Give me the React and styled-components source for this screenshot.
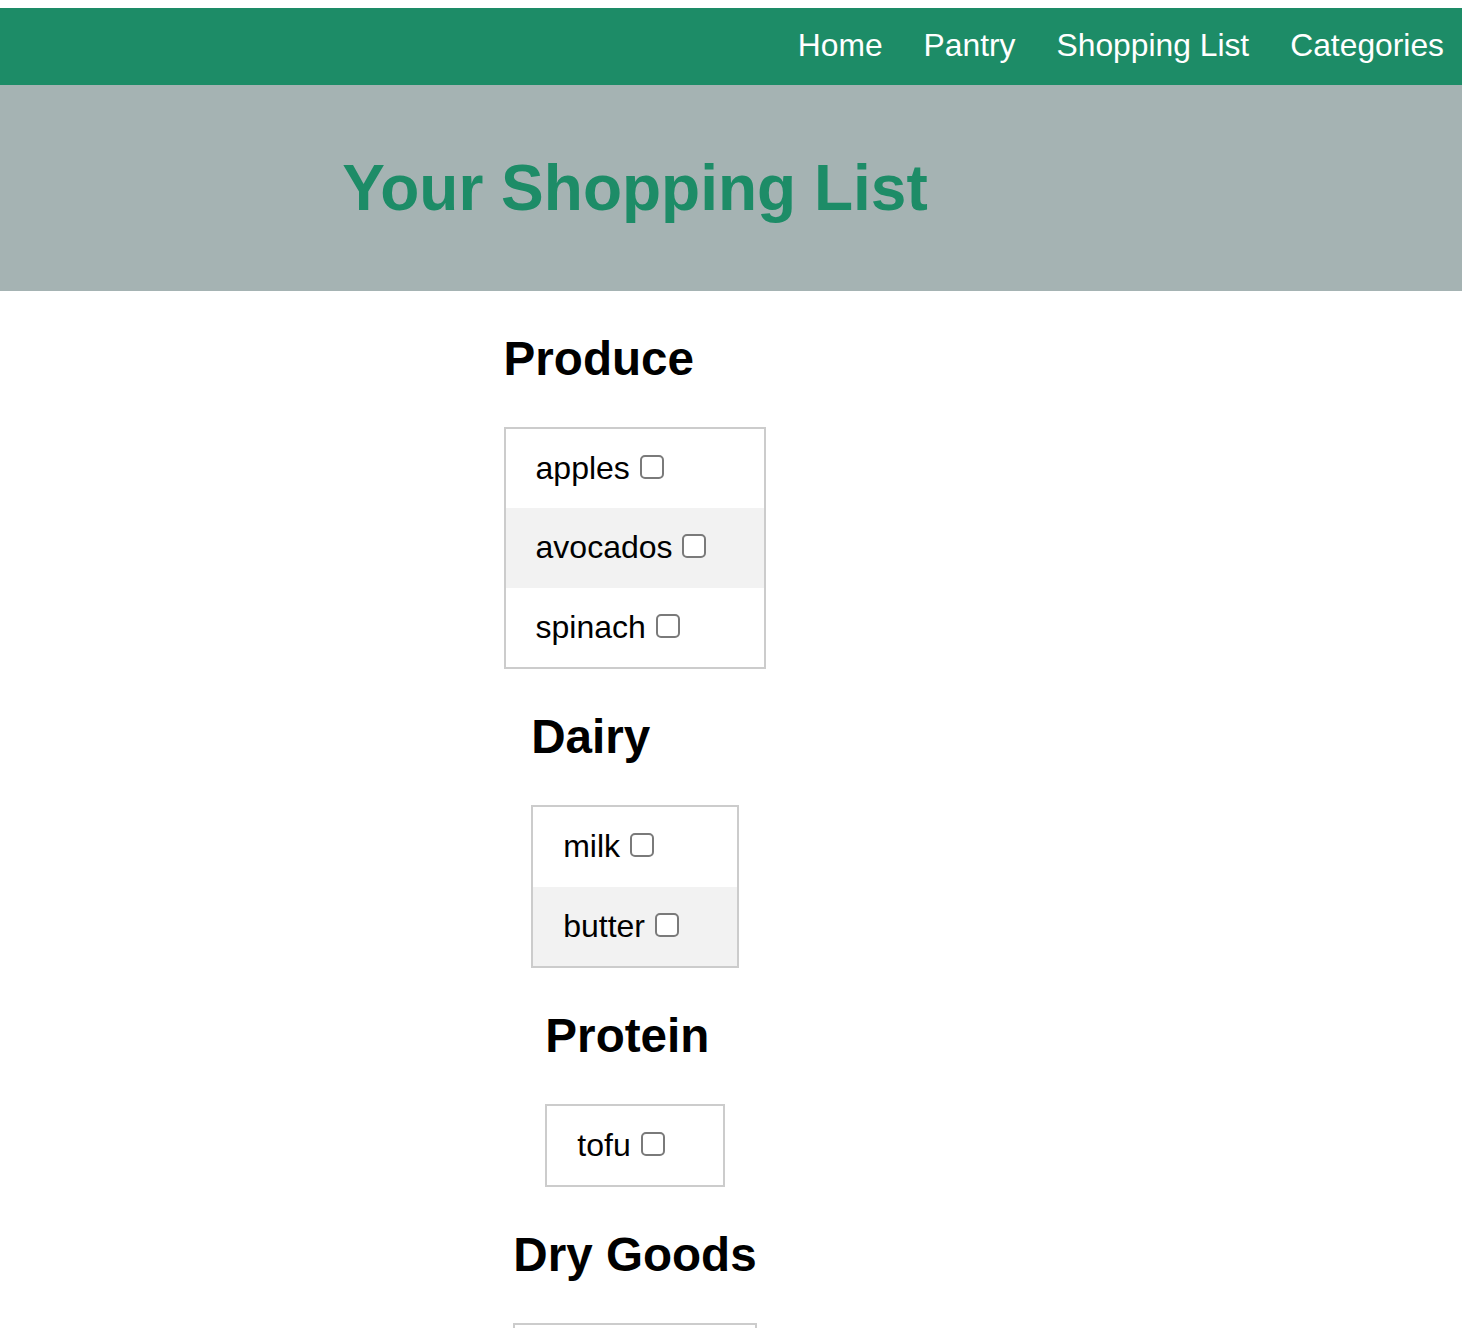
import React from "react";
import styled, { createGlobalStyle } from "styled-components";

const GlobalStyle = createGlobalStyle`
  html, body {
    margin: 0;
    padding: 0;
    background: #ffffff;
  }
  body {
    padding-top: 8px;
    font-family: "Liberation Sans", Arial, Helvetica, sans-serif;
    font-size: 32px;
    color: #000;
  }
`;

const NavBar = styled.nav`
  height: 77px;
  box-sizing: border-box;
  padding: 0 18px 1px 0;
  background: #1d8c67;
  display: flex;
  justify-content: flex-end;
  align-items: center;
  gap: 41px;
`;

const NavLink = styled.a`
  color: #ffffff;
  font-size: 31.8px;
  text-decoration: none;
  line-height: 1;
  cursor: pointer;
`;

const Hero = styled.header`
  background: #a5b3b3;
  height: 206px;
  display: flex;
  align-items: center;
  justify-content: center;
  padding-right: 192px;
  box-sizing: border-box;
`;

const Title = styled.h1`
  margin: 0;
  color: #1d8c67;
  font-size: 64px;
  font-weight: 700;
  line-height: normal;
`;

const Main = styled.main`
  display: flex;
  flex-direction: column;
  align-items: center;
  padding-right: 192px;
`;

const Section = styled.section`
  width: fit-content;
  display: flex;
  flex-direction: column;
  align-items: stretch;
`;

const Heading = styled.h2`
  margin: 40px 0 41px;
  font-size: 47.6px;
  font-weight: 700;
  line-height: 55px;
`;

const List = styled.ul`
  list-style: none;
  margin: 0;
  padding: 0;
  border: 2px solid #cccccc;
`;

const Row = styled.li`
  padding: 21px 58px 21.4px 30px;
  background: ${(p) => (p.$alt ? "#f2f2f2" : "#ffffff")};
  font-size: 32px;
  line-height: normal;
  white-space: nowrap;
`;

const Check = styled.input.attrs({ type: "checkbox" })`
  appearance: none;
  -webkit-appearance: none;
  display: inline-block;
  width: 24px;
  height: 24px;
  margin: 0 0 0 1px;
  border: 2px solid #7a7a7a;
  border-radius: 5px;
  background: #ffffff;
  box-sizing: border-box;
  vertical-align: baseline;
  cursor: pointer;
  &:checked {
    background: #1d8c67;
    border-color: #1d8c67;
  }
`;

const categories = [
  { name: "Produce", items: ["apples", "avocados", "spinach"] },
  { name: "Dairy", items: ["milk", "butter"] },
  { name: "Protein", items: ["tofu"] },
  { name: "Dry Goods", items: ["rice", "pasta"] },
];

export default function App() {
  return (
    <>
      <GlobalStyle />
      <NavBar>
        <NavLink>Home</NavLink>
        <NavLink>Pantry</NavLink>
        <NavLink>Shopping List</NavLink>
        <NavLink>Categories</NavLink>
      </NavBar>
      <Hero>
        <Title>Your Shopping List</Title>
      </Hero>
      <Main>
        {categories.map((cat) => (
          <Section key={cat.name}>
            <Heading>{cat.name}</Heading>
            <List>
              {cat.items.map((item, i) => (
                <Row key={item} $alt={i % 2 === 1}>
                  {item} <Check aria-label={item} />
                </Row>
              ))}
            </List>
          </Section>
        ))}
      </Main>
    </>
  );
}
